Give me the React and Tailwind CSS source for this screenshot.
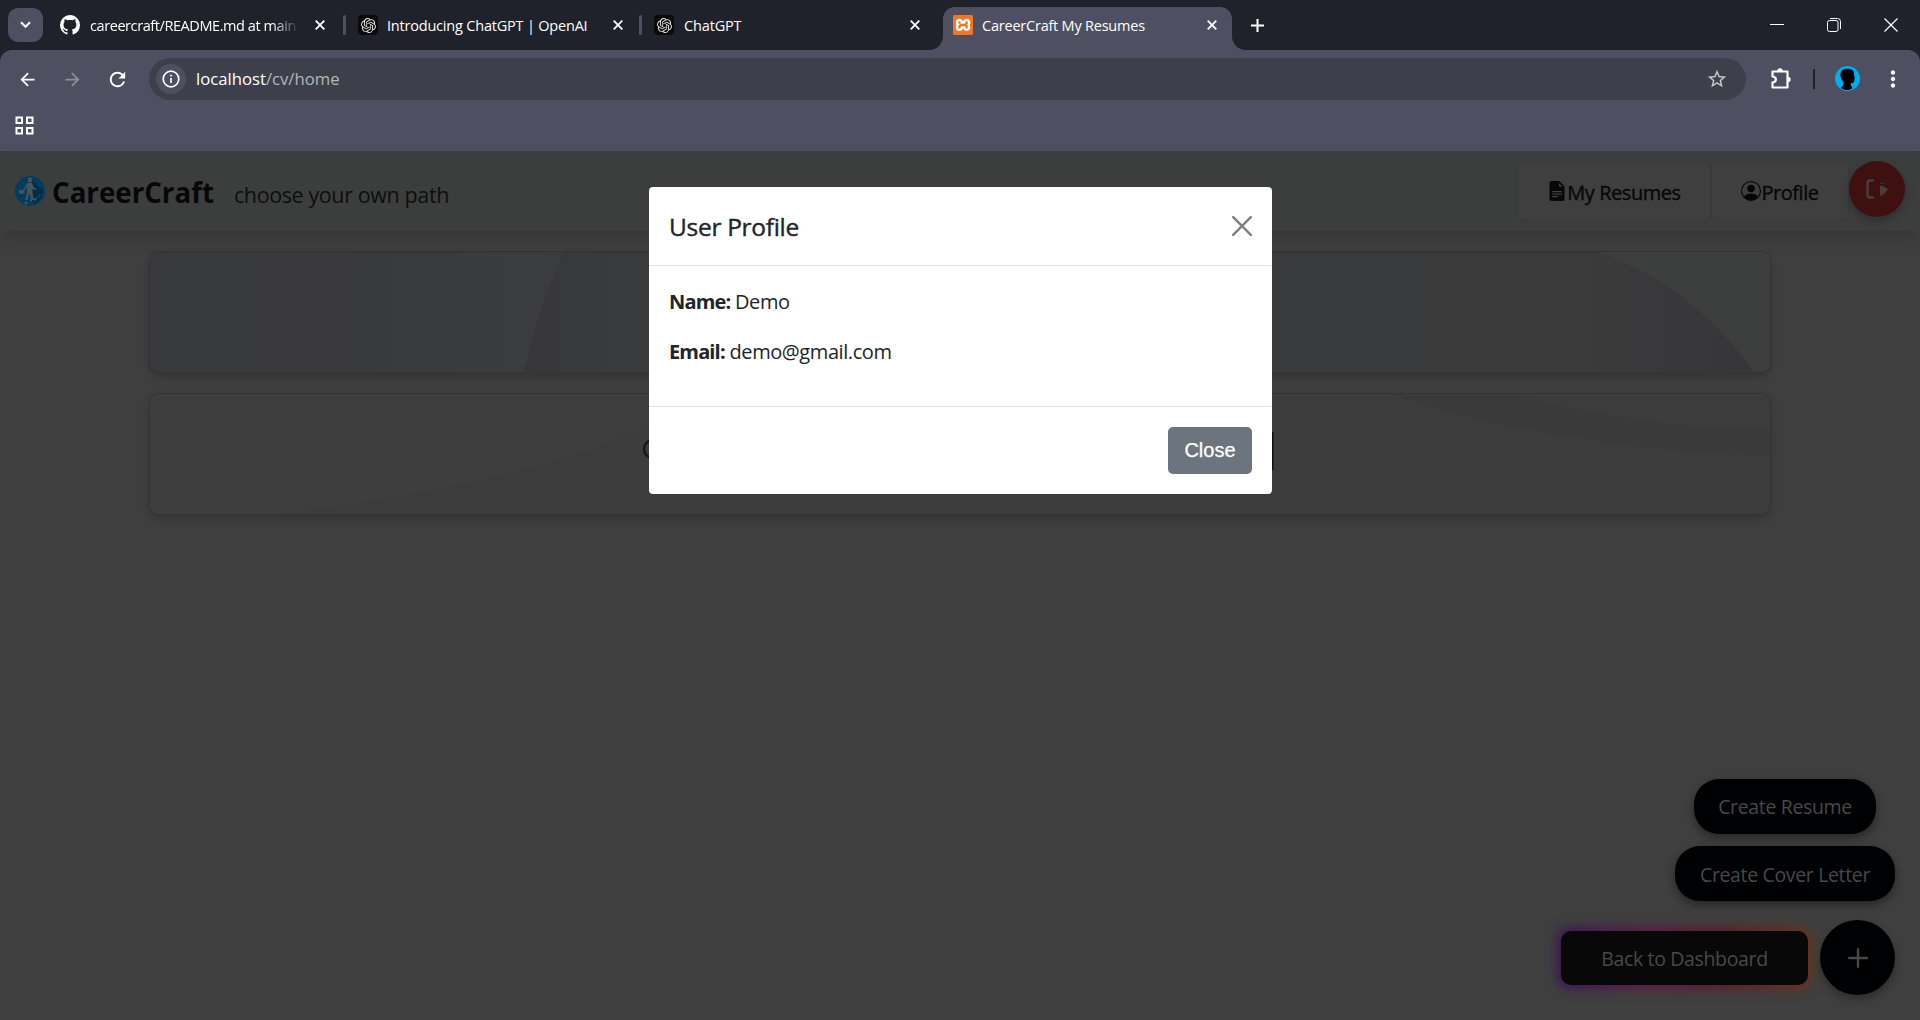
import React from "react";
import { VscGithubInverted } from "react-icons/vsc";
import { SiOpenai, SiXampp } from "react-icons/si";
import { BsFileEarmarkTextFill, BsPersonCircle } from "react-icons/bs";
import { MdArrowBack, MdArrowForward, MdRefresh, MdStarBorder, MdMoreVert } from "react-icons/md";

function TabClose() {
  return (
    <svg className="size-[10px] shrink-0" viewBox="0 0 10 10" stroke="#fff" strokeWidth="1.8">
      <path d="M0.7 0.7 9.3 9.3M9.3 0.7 0.7 9.3" />
    </svg>
  );
}

function OpenAiBadge() {
  return (
    <span className="flex size-5 shrink-0 items-center justify-center rounded bg-[#0b0b0c] text-[#e4e4e4]">
      <SiOpenai size={15} />
    </span>
  );
}

function TabStrip() {
  return (
    <div className="flex h-[50px] bg-[#1f222b] text-white">
      <div className="ml-2 mt-2 flex h-[34px] w-[35px] items-center justify-center rounded-[10px] bg-[#4e5062]">
        <svg width="11" height="8" viewBox="0 0 11 8" fill="none" stroke="#fff" strokeWidth="2"><path d="M1 1.2 5.5 5.8 10 1.2" /></svg>
      </div>
      <div className="ml-[17px] flex h-[50px] w-[267px] items-center">
        <VscGithubInverted size={20} className="shrink-0" />
        <span className="ml-[10px] mt-px w-[209px] whitespace-nowrap text-[14.5px] tracking-[-0.42px] [mask-image:linear-gradient(to_right,black_87%,transparent)]">careercraft/README.md at main</span>
        <span className="ml-4"><TabClose /></span>
      </div>
      <div className="mt-[15px] ml-[16px] h-5 w-[3px] rounded bg-[#4e5062]" />
      <div className="ml-[12px] flex h-[50px] w-[266px] items-center">
        <OpenAiBadge />
        <span className="ml-[9px] mt-px mr-px w-[225px] whitespace-nowrap text-[14.5px] tracking-[-0.2px]">Introducing ChatGPT | OpenAI</span>
        <TabClose />
      </div>
      <div className="mt-[15px] ml-[15px] h-5 w-[3px] rounded bg-[#4e5062]" />
      <div className="ml-[12px] flex h-[50px] w-[273px] items-center">
        <OpenAiBadge />
        <span className="ml-[10px] mt-px w-[226px] text-[14.5px] tracking-[-0.15px]">ChatGPT</span>
        <TabClose />
      </div>
      <div className="flex h-[50px]">
        <div className="w-4 self-end bg-[#4e5062]"><div className="h-4 rounded-br-[14px] bg-[#1f222b]" /></div>
        <div className="mt-[7px] flex h-[43px] w-[289px] items-center rounded-t-xl bg-[#4e5062] pb-[7px] pl-[10px]">
          <span className="flex size-5 shrink-0 items-center justify-center rounded-[2px] bg-[#f37623]">
            <span className="flex size-[18px] items-center justify-center bg-white text-[#f37623]"><SiXampp size={20} className="shrink-0" /></span>
          </span>
          <span className="ml-[9px] mt-px mr-px w-[224px] whitespace-nowrap text-[14.5px] tracking-[-0.22px]">CareerCraft My Resumes</span>
          <TabClose />
        </div>
        <div className="w-4 self-end bg-[#4e5062]"><div className="h-4 rounded-bl-[14px] bg-[#1f222b]" /></div>
      </div>
      <svg className="mt-[19px] ml-[3px]" width="13" height="13" viewBox="0 0 13 13" stroke="#fff" strokeWidth="2"><path d="M6.5 0v13M0 6.5h13" /></svg>
      <div className="ml-auto mr-[22px] flex items-center gap-[43px]">
        <svg width="14" height="14" stroke="#fff"><path d="M0 6.5h14" /></svg>
        <svg width="14" height="14" fill="none" stroke="#fff"><rect x="0.5" y="2.5" width="10.5" height="11" rx="2" /><path d="M3 .5h7.5a3 3 0 0 1 3 3V11" /></svg>
        <svg width="14" height="14" stroke="#fff" strokeWidth="1.2"><path d="M.5.5l13 13M13.5.5l-13 13" /></svg>
      </div>
    </div>
  );
}

function Toolbar() {
  return (
    <div className="bg-[#1f222b]">
      <div className="h-[101px] rounded-t-xl bg-[#4e5062] pt-2 text-white">
        <div className="flex h-[42px] items-center">
          <MdArrowBack size={21} className="ml-[17px]" />
          <MdArrowForward size={21} className="ml-[24px] text-[#8e8f99]" />
          <MdRefresh size={23} className="ml-[23px]" />
          <div className="ml-[20px] flex h-[42px] w-[1597px] items-center rounded-full bg-[#3d404b] pl-[7px] pr-[18px]">
            <span className="flex size-[30px] items-center justify-center rounded-full bg-[#4e5062]">
              <svg width="18" height="18" fill="none" stroke="#fff" strokeWidth="1.7"><circle cx="9" cy="9" r="7.8" /><path d="M9 8v5M9 4.8v1.7" /></svg>
            </span>
            <span className="ml-[10px] text-[16.7px]">localhost<span className="text-[#b4b5bb]">/cv/home</span></span>
            <MdStarBorder size={22} className="ml-auto text-[#c9c9cd]" />
          </div>
          <svg className="ml-[24px] shrink-0" width="22" height="22" viewBox="0 0 22 22">
            <path d="M2.5 3.500H17.500V19.500H2.500V14.500C7 13.800 7 9.200 2.500 8.500Z" fill="none" stroke="#fff" strokeWidth="2.200" strokeLinejoin="round" />
            <path d="M7.300 3a2.700 2.700 0 0 1 5.400 0ZM18 8.800a2.700 2.700 0 0 1 0 5.400Z" fill="#fff" />
          </svg>
          <div className="ml-[21px] h-5 w-[2px] shrink-0 bg-[#1f222b]" />
          <svg className="ml-[20px] -mt-px shrink-0" width="25" height="25" viewBox="0 0 25 25">
            <circle cx="12.5" cy="12.5" r="12.5" fill="#00aeef" />
            <path d="M7 4.5C9 2 15 2 18 4.500c1.500 2 .8 4 1.500 6.500.7 1.500-.3 2-.2 3.500.2 2-1.500 3-3.500 2.500-.5 2 .8 3.500 1.700 5-3 3-8 2.500-11.500 0 2-2 3-3.500 2.500-6C5 12.500 4.500 7.500 7 4.500Z" fill="#000" />
          </svg>
          <MdMoreVert size={26} className="ml-[20px] shrink-0" />
        </div>
        <svg className="ml-[15px] mt-[16px]" width="19" height="19" fill="none" stroke="#fff" strokeWidth="2"><path d="M1.500 1.500h5.500v5.500h-5.500zM12 1.500h5.500v5.500h-5.500zM1.500 12h5.500v5.500h-5.500zM12 12h5.500v5.500h-5.500z" /></svg>
      </div>
    </div>
  );
}

function Logo() {
  return (
    <svg className="size-[30px]" viewBox="0 0 30 30">
      <circle cx="15" cy="15" r="15" fill="#003d5e" />
      <path d="M17 4 28 14a13 13 0 0 1-9 14l-3-4Z" fill="#002e48" />
      <g fill="#47525a">
        <circle cx="15" cy="4" r="2.400" />
        <path d="M12.500 7h4.500l2 4.500 2.500 1-1 1.500-3-1v4l1.500 7h-2.500l-2-7-2 7h-2.500l2-8 .5-6-1.500 3-2.500 2-.7-1.300 2-2.300Z" />
        <rect x="4" y="14" width="5.500" height="3.800" rx="1" />
        <circle cx="11" cy="27" r="1.500" /><circle cx="16" cy="24" r="1.400" /><circle cx="20" cy="23.500" r="1.200" />
      </g>
      <path d="M20 23h2v-2h2v-2h3" stroke="#47525a" strokeDasharray="1 1" fill="none" />
    </svg>
  );
}

function Header() {
  return (
    <header className="relative flex h-20 bg-[#3c3e3d] text-[#070707] shadow-[0_8px_16px_rgba(0,0,0,0.14)]">
      <div className="ml-[15px] mt-[25px]"><Logo /></div>
      <span className="ml-[7px] mt-[19px] whitespace-nowrap text-[27.700px] leading-[44px] font-bold">CareerCraft</span>
      <span className="ml-[20px] mt-[24px] whitespace-nowrap text-[21.500px] leading-[40px] tracking-[-0.39px] text-[#0d0e0e]">choose your own path</span>
      <nav className="ml-auto mr-[15px] flex pt-[10px]">
        <div className="flex h-[60px] w-[194px] items-center justify-center rounded-md border border-[#393939] bg-[#3f3f3f] text-[20px] tracking-[-0.45px] [-webkit-text-stroke:0.35px]"><BsFileEarmarkTextFill size={20} /><span className="mt-[3px]">My Resumes</span></div>
        <div className="flex h-[60px] w-[138px] items-center justify-center rounded-md border border-[#393939] bg-[#3f3f3f] text-[20px] tracking-[-0.45px] [-webkit-text-stroke:0.35px]"><BsPersonCircle size={20} /><span className="mt-[3px]">Profile</span></div>
        <div className="flex size-14 items-center justify-center rounded-full bg-[#3f1010] shadow-[0_4px_10px_rgba(0,0,0,0.25)]">
          <svg width="24" height="20" viewBox="0 0 24 20"><path d="M9 1.500H5Q2.500 1.500 2.500 4v12Q2.500 18.500 5 18.500h4" fill="none" stroke="#4b3b3b" strokeWidth="2.500" /><path d="M15 7h3l5 3.500-5 5.500-3 1Z" fill="#4b3b3b" /><path d="M15 4.500h5" stroke="#4b3b3b" strokeDasharray="1 1" /></svg>
        </div>
      </nav>
    </header>
  );
}

function Fab() {
  return (
    <div className="absolute right-[25px] bottom-[25px] flex flex-col items-end text-[19.500px] tracking-[-0.35px] text-[#484848]">
      <div className="mr-[19px] flex h-[55px] w-[182px] items-center justify-center rounded-[25px] bg-[#000102] pt-px shadow-[0_4px_10px_rgba(0,0,0,0.4)]">Create Resume</div>
      <div className="mt-3 flex h-[55px] w-[220px] items-center justify-center rounded-[25px] bg-[#000102] pt-[3px] shadow-[0_4px_10px_rgba(0,0,0,0.4)]">Create Cover Letter</div>
      <div className="mt-[19px] flex items-center gap-3">
        <div className="relative h-[54px] w-[247px]">
          <div className="absolute -inset-[3px] rounded-xl bg-[linear-gradient(90deg,#380f55,#601448_35%,#601627_65%,#703014)] blur-[6px]" />
          <div className="relative flex h-full items-center justify-center rounded-[10px] bg-[#080808] pt-[2px]">Back to Dashboard</div>
        </div>
        <div className="flex size-[75px] items-center justify-center rounded-full bg-[#000102] shadow-[0_4px_10px_rgba(0,0,0,0.3)]">
          <svg width="20" height="20" stroke="#484848" strokeWidth="2.400" strokeLinecap="round"><path d="M10 1.200v17.600M1.200 10h17.600" /></svg>
        </div>
      </div>
    </div>
  );
}

function Modal() {
  return (
    <div className="absolute left-[649px] top-[36px] w-[623px] rounded bg-white text-[#212529]">
      <div className="flex h-[79px] items-center border-b border-[#dee2e6] px-5">
        <h2 className="mt-[2px] text-[24.500px] tracking-[-0.3px] [-webkit-text-stroke:0.4px]">User Profile</h2>
        <svg className="ml-auto" width="20" height="20" stroke="#7f7f7f" strokeWidth="2.400" strokeLinecap="round"><path d="M1.200 1.200l17.600 17.600M18.800 1.200L1.200 18.800" /></svg>
      </div>
      <div className="h-[141px] border-b border-[#dee2e6] px-5 pt-[21px] text-[20px] leading-[30px] tracking-[-0.42px]">
        <p><b className="tracking-[-0.85px]">Name:</b> Demo</p>
        <p className="mt-5"><b className="tracking-[-0.85px]">Email:</b> demo@gmail.com</p>
      </div>
      <div className="flex h-[87px] items-center justify-end px-5">
        <button className="h-[47px] w-[84px] rounded-[5px] bg-[#6c757d] pb-[2px] font-['Liberation_Sans'] text-[20px] text-white [-webkit-text-stroke:0.25px]">Close</button>
      </div>
    </div>
  );
}

export default function App() {
  return (
    <div className="flex h-[1020px] w-[1920px] flex-col overflow-hidden font-['Open_Sans','Noto_Sans',sans-serif]">
      <TabStrip />
      <Toolbar />
      <div className="relative flex-1 bg-[#3f3f3f]">
        <Header />
        <main className="mx-auto mt-5 flex w-[1622px] flex-col gap-5">
          <div className="h-[122px] overflow-hidden rounded-[10px] border border-[#343434] bg-[#3a3a3d] shadow-[0_4px_8px_rgba(0,0,0,0.18)]">
            <svg width="1620" height="120" viewBox="0 0 1620 120">
              <defs>
                <linearGradient id="wash"><stop stopColor="#383a3e" /><stop offset=".08" stopColor="#39393b" /><stop offset=".24" stopColor="#3b3c3d" /><stop offset="1" stopColor="#3d3e3e" /></linearGradient>
                <linearGradient id="disc"><stop stopColor="#37373a" /><stop offset=".08" stopColor="#3a3b3d" /><stop offset=".85" stopColor="#3b3b3c" /><stop offset="1" stopColor="#363638" /></linearGradient>
              </defs>
              <rect width="1620" height="120" fill="url(#wash)" />
              <path d="M414 0Q386 60 374 120H1604Q1543 34 1449 0Z" fill="url(#disc)" />
            </svg>
          </div>
          <div className="h-[122px] overflow-hidden rounded-[10px] border border-[#343434] bg-[#3e3e3e] shadow-[0_4px_8px_rgba(0,0,0,0.18)]">
            <svg width="1620" height="120" viewBox="0 0 1620 120">
              <path d="M130 120Q360 90 480 40L620 0H1250L1060 120Z" fill="#3c3c3c" />
              <path d="M1000 0H1620V120H1000Z" fill="#3c3c3c" />
              <path d="M1240 0H1360Q1500 36 1620 36V62Q1380 50 1240 0Z" fill="#3a3a3a" />
              <circle cx="503" cy="55" r="9" fill="none" stroke="#171717" strokeWidth="2.500" />
              <path d="M1122.500 38v38" stroke="#111" strokeWidth="2" />
            </svg>
          </div>
        </main>
        <Fab />
        <Modal />
      </div>
    </div>
  );
}
